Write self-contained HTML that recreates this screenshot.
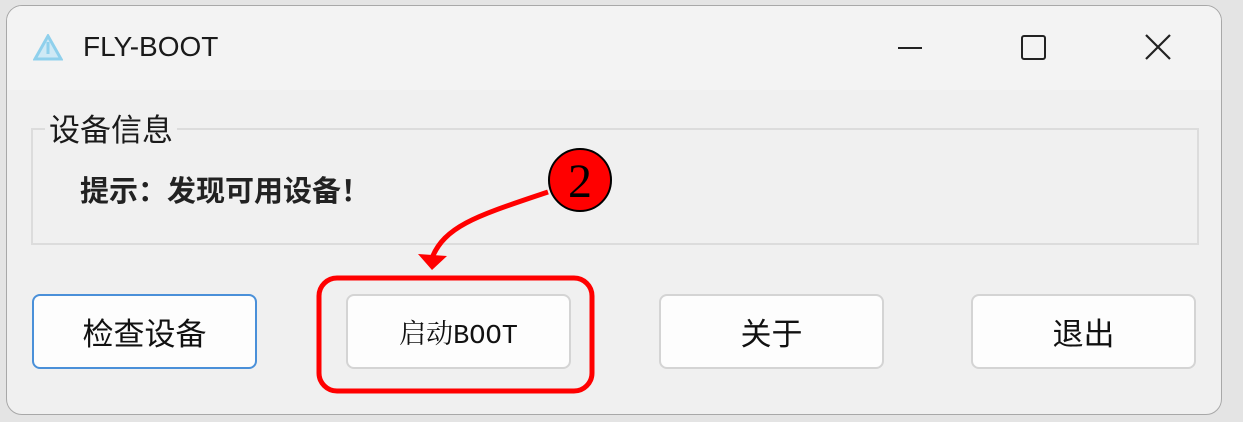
<!DOCTYPE html>
<html><head><meta charset="utf-8"><style>
body{margin:0;width:1243px;height:422px;background:#e4e4e4;position:relative;overflow:hidden;font-family:"Liberation Sans","Noto Sans CJK SC",sans-serif}
.win{position:absolute;left:6px;top:5px;width:1214px;height:408px;background:#f0f0f0;border:1px solid #a8a8a8;border-radius:16px;overflow:hidden}
.title{position:absolute;left:0;top:0;width:100%;height:84px;background:#f3f3f3}
.t{position:absolute;font-size:25px;color:#1a1a1a;white-space:nowrap}
.grp{position:absolute;left:24px;top:122px;width:1168px;height:117px;border:2px solid #dcdcdc;box-sizing:border-box}
.btn{position:absolute;top:288px;width:225px;height:75px;background:#fdfdfd;border:2px solid #d4d4d4;border-radius:8px;box-sizing:border-box;display:flex;align-items:center;justify-content:center;font-size:31px;color:#111}
</style></head><body>
<div class="win">
<div class="title"></div>
<svg style="position:absolute;left:26px;top:28px" width="30" height="28" viewBox="0 0 30 28"><path d="M15 2 L28 25 L2 25 Z" fill="#cfe9f5" stroke="#8fd0ec" stroke-width="3"/><path d="M15 8 V20" stroke="#8fd0ec" stroke-width="3"/></svg>
<div class="t" style="left:76px;top:25px;font-size:28px">FLY-BOOT</div>
<div style="position:absolute;left:891px;top:41px;width:24px;height:2px;background:#222"></div>
<div style="position:absolute;left:1014px;top:29px;width:21px;height:21px;border:2.5px solid #222;border-radius:3px"></div>
<svg style="position:absolute;left:1138px;top:28px" width="26" height="26"><path d="M1 1 L25 25 M25 1 L1 25" stroke="#222" stroke-width="2.2"/></svg>
<div class="grp"></div>
<div class="t" style="left:38px;top:99px;background:#f0f0f0;padding:0 4px;font-size:31px">设备信息</div>
<div class="t" style="left:73px;top:162px;font-weight:bold;font-size:29px;color:#222">提示：发现可用设备！</div>
<div class="btn" style="left:25px;border-color:#4a90d9">检查设备</div>
<div class="btn" style="left:339px;font-family:'Liberation Mono','Noto Serif CJK SC',monospace;font-size:27px">启动BOOT</div>
<div class="btn" style="left:652px">关于</div>
<div class="btn" style="left:964px">退出</div>
</div>
<svg style="position:absolute;left:0;top:0" width="1243" height="422">
<rect x="319" y="278" width="273" height="113" rx="18" fill="none" stroke="#f00" stroke-width="5"/>
<path d="M548 192 C480 215 445 225 432 258" fill="none" stroke="#f00" stroke-width="5"/>
<path d="M418 254 L432 270 L447 256 Z" fill="#f00"/>
<circle cx="580" cy="180" r="31" fill="#f00" stroke="#000" stroke-width="2"/>
<text x="580" y="197" text-anchor="middle" font-family="Liberation Serif,serif" font-size="48" fill="#000">2</text>
</svg>
</body></html>
